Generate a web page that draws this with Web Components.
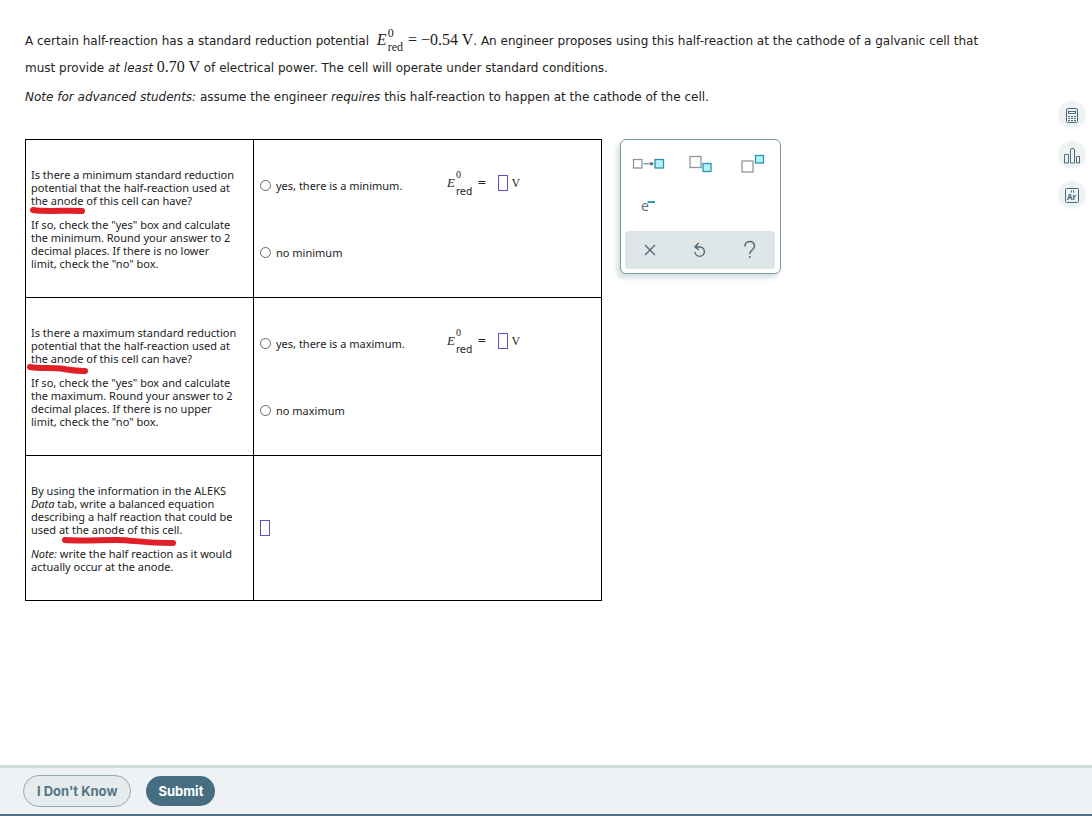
<!DOCTYPE html>
<html lang="en">
<head>
<meta charset="utf-8">
<title>Galvanic cell question</title>
<style>
html, body { margin: 0; }
body { font-family: "DejaVu Sans", Verdana, sans-serif; font-size: 12px; color: #222; background: #fff; }
</style>
</head>
<body>
<quiz-page></quiz-page>
<script>
function define(name, html, init) {
  const template = document.createElement('template');
  template.innerHTML = html;
  customElements.define(name, class extends HTMLElement {
    connectedCallback() {
      if (this.shadowRoot) return;
      this.attachShadow({ mode: 'open' }).append(template.content.cloneNode(true));
      if (init) init(this, this.shadowRoot);
    }
  });
}

/* E with a raised 0 and a lowered "red" */
define('red-potential', `
<style>
:host { display: inline-grid; grid-template-columns: auto auto; vertical-align: middle; align-items: center;
  font-family: "Liberation Serif", serif; line-height: 14px; font-size: 16px; margin: -3px 1px 1px 4px; }
.e { font-style: italic; }
.scripts { display: grid; font-size: 12px; margin-left: 1px; }
:host([small]) { font-size: 13px; line-height: 17px; margin: 0; }
:host([small]) .scripts { font-size: 10px; }
:host([small]) .red { font-family: "DejaVu Sans", sans-serif; font-size: 10px; }
</style>
<span class="e">E</span><span class="scripts"><span>0</span><span class="red">red</span></span>`);

define('answer-box', `
<style>
:host { display: inline-flex; vertical-align: middle; }
input { box-sizing: border-box; width: 10px; height: 16px; margin: 0; padding: 0; border: 1px solid #5a52d0; border-radius: 0; background: #fff; font: 11px "Noto Sans", sans-serif; }
</style>
<input type="text">`, (host, root) => root.querySelector('input').setAttribute('aria-label', host.getAttribute('label')));

/* Hand-drawn red stroke beneath a phrase */
define('red-mark', `
<style>
:host { display: inline-block; position: relative; }
svg { position: absolute; left: -4px; top: 8px; overflow: visible; pointer-events: none; }
path { fill: none; stroke: #e01f26; stroke-width: 6; stroke-linecap: round; stroke-linejoin: round; }
</style>
<slot></slot><svg width="1" height="1" aria-hidden="true"><path/></svg>`,
(host, root) => root.querySelector('path').setAttribute('d', host.getAttribute('d')));

define('limit-choice', `
<style>
:host { display: block; }
fieldset { margin: 0; padding: 0; border: 0; display: grid; grid-template-columns: 187px 1fr; grid-auto-rows: 67px; align-items: center; }
label { display: flex; align-items: center; gap: 5px; }
input { appearance: none; box-sizing: border-box; width: 11px; height: 11px; margin: 0; border: 1px solid #666; border-radius: 50%; background: #fff; }
input:checked { background: #666; box-shadow: inset 0 0 0 2px #fff; }
.eq { display: flex; align-items: center; padding-bottom: 5px; }
.sign { margin: 0 11px 0 5px; font: 11px/13px "DejaVu Sans", sans-serif; }
.unit { font: 12px/16px "Liberation Serif", serif; margin-left: 4px; }
</style>
<fieldset>
<label><input type="radio" name="limit" value="yes"><slot name="yes"></slot></label>
<div class="eq"><red-potential small></red-potential><span class="sign">=</span><answer-box label="Potential in volts"></answer-box><span class="unit">V</span></div>
<label><input type="radio" name="limit" value="no"><slot name="no"></slot></label>
</fieldset>`);

define('answer-table', `
<style>
:host { display: block; font-family: "Noto Sans", Verdana, sans-serif; font-size: 11px; line-height: 13px; }
table { width: 100%; border-collapse: collapse; table-layout: fixed; }
td { box-sizing: border-box; height: 158px; padding: 0 6px; border: 1px solid #000; vertical-align: middle; }
td:first-child { width: 228px; padding: 0 0 0 5px; white-space: nowrap; }
tr:last-child td { height: 145px; }
p { margin: 0; }
p + p { margin-top: 11px; }
</style>
<table>
<tr>
<td><p>Is there a minimum standard reduction<br>potential that the half-reaction used at<br><red-mark d="M6 8 C20 10 40 8 55 9">the anode</red-mark> of this cell can have?</p>
<p>If so, check the "yes" box and calculate<br>the minimum. Round your answer to 2<br>decimal places. If there is no lower<br>limit, check the "no" box.</p></td>
<td><limit-choice><span slot="yes">yes, there is a minimum.</span><span slot="no">no minimum</span></limit-choice></td>
</tr>
<tr>
<td><p>Is there a maximum standard reduction<br>potential that the half-reaction used at<br><red-mark d="M3 7 C14 9 25 7 37 9 S48 11 58 11">the anode</red-mark> of this cell can have?</p>
<p>If so, check the "yes" box and calculate<br>the maximum. Round your answer to 2<br>decimal places. If there is no upper<br>limit, check the "no" box.</p></td>
<td><limit-choice><span slot="yes">yes, there is a maximum.</span><span slot="no">no maximum</span></limit-choice></td>
</tr>
<tr>
<td><p>By using the information in the ALEKS<br><i>Data</i> tab, write a balanced equation<br>describing a half reaction that could be<br>used <red-mark d="M10 9 C25 10 45 9 62 9 S85 12 118 12">at the anode of this cell.</red-mark></p>
<p><i>Note:</i> write the half reaction as it would<br>actually occur at the anode.</p></td>
<td><answer-box label="Half reaction"></answer-box></td>
</tr>
</table>`);

define('symbol-pad', `
<style>
:host { display: block; box-sizing: border-box; width: 161px; padding: 3px 4px 4px; border: 1px solid #7e9aa6; border-radius: 6px; background: #fff; box-shadow: -3px 4px 5px #d5dee1; }
.keys, .bar { display: grid; grid-template-columns: repeat(3, 50px); }
.bar { width: 150px; background: #dfe6e8; border-radius: 3px; }
button { padding: 0; margin: 0; border: 0; background: none; height: 44px; }
.bar button { height: 38px; }
svg { display: block; fill: none; stroke: #4c6b7a; }
.box { stroke: #8b979d; stroke-width: 1.300; }
.fill { stroke: #2c93a8; fill: #b5f0fa; stroke-width: 1.300; }
text { stroke: none; fill: #5a6f7a; font: 14px "Open Sans", sans-serif; }
</style>
<div class="keys">
<button aria-label="Reaction arrow"><svg width="50" height="44"><rect class="box" x="8.500" y="16.500" width="8.500" height="8.500"/><path d="M18.500 20.800h9"/><path d="M25.500 18.500l3.500 2.300-3.500 2.300z" fill="#4c6b7a" stroke="none"/><rect class="fill" x="30" y="16.500" width="8.500" height="8.500"/></svg></button>
<button aria-label="Subscript"><svg width="50" height="44"><rect class="box" x="15" y="13.500" width="11" height="11"/><rect class="fill" x="28" y="20.500" width="8" height="8"/></svg></button>
<button aria-label="Superscript"><svg width="50" height="44"><rect class="box" x="17" y="18" width="11" height="11"/><rect class="fill" x="30.500" y="12.500" width="8" height="7.500"/></svg></button>
<button aria-label="Electron"><svg width="50" height="44"><text x="16" y="24">e</text><path d="M22.500 15h7.500" stroke="#2c9aa8" stroke-width="2"/></svg></button>
</div>
<div class="bar">
<button aria-label="Clear"><svg width="50" height="38" stroke-width="1.400"><path d="M20 14l10 10M30 14l-10 10"/></svg></button>
<button aria-label="Reset"><svg width="50" height="38" stroke-width="1.400"><path d="M20.500 16h5a4.700 4.700 0 1 1-5.500 5M23.500 12l-3.500 4 4 3"/></svg></button>
<button aria-label="Help"><svg width="50" height="38" stroke-width="1.500"><path d="M20 15.500c0-6.500 9.500-6.500 9.500-.5 0 4-4.700 4-4.700 8M24.800 25v2"/></svg></button>
</div>`);

define('tool-rail', `
<style>
:host { display: grid; gap: 12px; }
button { width: 28px; height: 28px; padding: 0; border: 0; border-radius: 50%; background: #eff3f4; }
svg { display: block; fill: none; stroke: #4c6b7a; }
text { stroke: none; fill: #3f5f6e; font: bold 8px "Open Sans", sans-serif; }
</style>
<button aria-label="Calculator"><svg width="28" height="28"><rect x="8.500" y="7.500" width="11" height="14" rx="1"/><path d="M10.500 10.500h7M10.500 12.500h7M10.500 9.500v3M17.500 9.500v3"/><path d="M10 15.500h8M10 17.500h8M10 19.500h8" stroke-dasharray="2 1"/></svg></button>
<button aria-label="Chart"><svg width="28" height="28"><path d="M6.500 13.500h4v8.500h-4zM12.500 9q0-1.500 1.500-1.500h1q1.500 0 1.500 1.500v13h-4zM18.500 15.500h3v6.500h-3z"/></svg></button>
<button aria-label="Periodic table"><svg width="28" height="28"><rect x="7.500" y="7.500" width="13" height="14" rx="1"/><path d="M13 10.500h3" stroke-width="2" stroke-dasharray="1 1"/><text x="9" y="19">Ar</text></svg></button>`);

define('action-bar', `
<style>
:host { display: flex; align-items: center; gap: 15px; box-sizing: border-box; height: 51px; padding-left: 23px; border-top: 3px solid #cfd9dc; border-bottom: 2px solid #507588; background: #eff2f4; }
button { box-sizing: border-box; height: 30px; padding: 0 12px; border: 0; border-radius: 16px; font: 700 13px Inter, sans-serif; color: #fff; background: #466e80; }
.quiet { height: 32px; padding: 0 13px; border: 1px solid #93abb6; color: #547483; background: #e6ecee; }
</style>
<button class="quiet">I Don't Know</button><button>Submit</button>`);

define('quiz-page', `
<style>
:host { display: flex; flex-direction: column; min-height: 100vh; }
main { flex: 1; display: grid; grid-template-columns: 1fr auto; padding: 28px 6px 0 25px; }
p { margin: 0; line-height: 27px; }
.note { margin-top: 2px; }
.intro { max-width: 985px; }
.math { font: 16px/20px "Liberation Serif", serif; }
.work { display: flex; align-items: flex-start; gap: 18px; margin-top: 28px; }
answer-table { flex: 0 1 577px; }
tool-rail { margin-top: 73px; align-self: start; }
</style>
<main>
<div>
<div class="intro">
<p>A certain half-reaction has a standard reduction potential <red-potential></red-potential><span class="math"> = −0.54 V</span>. An engineer proposes using this half-reaction at the cathode of a galvanic cell that<br>must provide <i>at least</i> <span class="math">0.70 V</span> of electrical power. The cell will operate under standard conditions.</p>
<p class="note"><i>Note for advanced students:</i> assume the engineer <i>requires</i> this half-reaction to happen at the cathode of the cell.</p>
</div>
<div class="work"><answer-table></answer-table><symbol-pad></symbol-pad></div>
</div>
<tool-rail></tool-rail>
</main>
<action-bar></action-bar>`);
</script>
</body>
</html>
